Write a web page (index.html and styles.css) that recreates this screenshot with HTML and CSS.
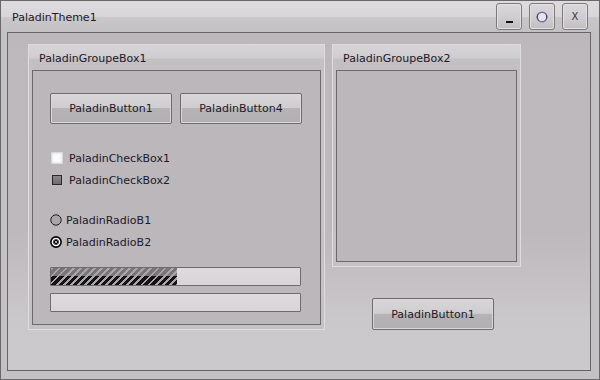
FILE: index.html
```html
<!DOCTYPE html>
<html lang="en">
<head>
    <meta charset="UTF-8">
    <title>PaladinTheme1</title>
    <link rel="stylesheet" href="styles.css">
</head>
<body>
    <div class="window">
        <!-- Title bar -->
        <div class="titleBar">
            <span class="title">PaladinTheme1</span>
            <div class="controls">
                <div class="ctrl"><span class="minIcon"></span></div>
                <div class="ctrl">
                    <svg width="12" height="12" viewBox="0 0 12 12">
                        <defs>
                            <linearGradient id="ring" x1="0" y1="0" x2="0" y2="1">
                                <stop offset="0" stop-color="#8a6a9a"/>
                                <stop offset="0.5" stop-color="#3a3a6a"/>
                                <stop offset="1" stop-color="#7a7ab0"/>
                            </linearGradient>
                        </defs>
                        <circle cx="6" cy="6" r="4.8" fill="#e6e4ea" stroke="url(#ring)" stroke-width="1.4"/>
                    </svg>
                </div>
                <div class="ctrl"><span class="closeIcon">X</span></div>
            </div>
        </div>

        <div class="panel">
            <!-- Left group box -->
            <div class="groupBox box1">
                <div class="groupHeader">PaladinGroupeBox1</div>
                <div class="groupBody body1">
                    <div class="buttonRow">
                        <button class="pButton">PaladinButton1</button>
                        <button class="pButton">PaladinButton4</button>
                    </div>

                    <div class="checkRow first">
                        <span class="checkSlot"><span class="check1"></span></span>
                        <span class="label">PaladinCheckBox1</span>
                    </div>
                    <div class="checkRow">
                        <span class="checkSlot"><span class="check2"></span></span>
                        <span class="label">PaladinCheckBox2</span>
                    </div>

                    <div class="radioRow first">
                        <svg class="radio" width="12" height="12" viewBox="0 0 12 12">
                            <circle cx="6" cy="6" r="5.2" fill="#a9a5a9" stroke="#1e1e1e" stroke-width="1"/>
                        </svg>
                        <span class="label">PaladinRadioB1</span>
                    </div>
                    <div class="radioRow">
                        <svg class="radio" width="12" height="12" viewBox="0 0 12 12">
                            <circle cx="6" cy="6" r="5.1" fill="#ffffff" stroke="#000000" stroke-width="1.6"/>
                            <circle cx="6" cy="6" r="2.8" fill="#000000"/>
                            <path d="M4.6 4.6 L7.4 7.4 M7.4 4.6 L4.6 7.4" stroke="#ffffff" stroke-width="0.7"/>
                        </svg>
                        <span class="label">PaladinRadioB2</span>
                    </div>

                    <div class="progress first"><div class="progressFill" style="width: 50.6%;"></div></div>
                    <div class="progress"></div>
                </div>
            </div>

            <!-- Right column -->
            <div class="rightColumn">
                <div class="groupBox box2">
                    <div class="groupHeader">PaladinGroupeBox2</div>
                    <div class="groupBody"></div>
                </div>
                <button class="pButton tall">PaladinButton1</button>
            </div>
        </div>
    </div>
</body>
</html>
```

FILE: styles.css
```css
body {
    margin: 0;
    font-family: "DejaVu Sans", Verdana, sans-serif;
    font-size: 11px;
    color: #221828;
}

.window {
    width: 600px;
    height: 380px;
    box-sizing: border-box;
    border: 1px solid #6a686a;
    background-color: #c3c1c3;
    display: flex;
    flex-direction: column;
}

/* Title bar */
.titleBar {
    height: 31px;
    flex-shrink: 0;
    display: flex;
    align-items: flex-start;
    justify-content: space-between;
    background: linear-gradient(#dddbdd, #d8d6d8 50%, #c9c7c9 52%, #c3c1c3);
}

.title {
    margin: 10px 0 0 11px;
}

.controls {
    display: flex;
    gap: 7px;
    margin: 2px 11px 0 0;
}

.ctrl {
    width: 26px;
    height: 27px;
    box-sizing: border-box;
    border: 1px solid #7c7a7c;
    border-radius: 3px;
    box-shadow: inset 0 0 0 1px #e2e0e2;
    background: linear-gradient(#dad8da, #cfcdcf 55%, #c0bec0);
    display: flex;
    align-items: center;
    justify-content: center;
}

.minIcon {
    width: 7px;
    height: 2px;
    background-color: #111;
    margin-top: 10px;
}

.closeIcon {
    font-size: 10px;
    color: #3a3060;
}

/* Main panel */
.panel {
    height: 339px;
    box-sizing: border-box;
    margin: 0 8px 0 6px;
    border: 1px solid #666466;
    background: linear-gradient(#bcb8bc, #bdb9bd 60%, #cbc8cb 85%, #ccc9cc);
    padding: 11px 0 0 20px;
    display: flex;
    gap: 7px;
    align-items: flex-start;
}

/* Group boxes */
.groupBox {
    box-sizing: border-box;
    border: 1px solid #dedcde;
    padding: 0 3px 4px 3px;
    display: flex;
    flex-direction: column;
    background-color: #c4c2c4;
}

.box1 {
    width: 297px;
    height: 286px;
}

.box2 {
    width: 189px;
    height: 223px;
}

.groupHeader {
    height: 25px;
    flex-shrink: 0;
    box-sizing: border-box;
    padding: 7px 0 0 10px;
    margin: 0 -3px;
    background: linear-gradient(#d6d4d6, #cfcdcf 52%, #c2c0c2 56%, #c2c0c2);
}

.groupBody {
    flex: 1;
    border: 1px solid #6c6a6c;
    background-color: #bbb7bb;
}

.body1 {
    padding: 22px 0 0 17px;
}

/* Buttons */
.buttonRow {
    display: flex;
    gap: 8px;
}

.pButton {
    width: 122px;
    height: 31px;
    border: 1px solid #6e6c6e;
    border-radius: 2px;
    box-shadow: inset 0 0 0 1px #d9d7d9;
    background: linear-gradient(#d8d6d8, #cfcdcf 48%, #b5b3b5 50%, #b1afb1);
    font-family: "DejaVu Sans", Verdana, sans-serif;
    font-size: 11px;
    color: #221828;
    padding: 0;
}

.pButton.tall {
    height: 32px;
    margin: 31px 0 0 40px;
}

/* Check boxes and radios */
.checkRow,
.radioRow {
    height: 22px;
    display: flex;
    align-items: center;
}

.checkRow.first {
    margin-top: 23px;
}

.checkSlot {
    width: 12px;
    height: 12px;
    margin-left: 1px;
    margin-right: 6px;
    display: flex;
    align-items: center;
    justify-content: center;
}

.check1 {
    width: 12px;
    height: 12px;
    box-sizing: border-box;
    background-color: #fbfbfb;
    box-shadow: inset 0 0 2px 1px #d0ced0;
}

.check2 {
    width: 10px;
    height: 10px;
    box-sizing: border-box;
    border: 1px solid #2a2a2a;
    background: linear-gradient(#8a888a, #6e6c6e);
}

.radioRow.first {
    margin-top: 18px;
}

.radio {
    margin: 0 4px 0 0;
}

/* Progress bars */
.progress {
    width: 251px;
    height: 19px;
    box-sizing: border-box;
    border: 1px solid #6e6c6e;
    border-radius: 1px;
    background: linear-gradient(#dedade, #d8d4d8);
    margin-top: 7px;
}

.progress.first {
    margin-top: 14px;
}

.progressFill {
    height: 100%;
    background:
        repeating-linear-gradient(135deg, #a8a6a8 0 2px, transparent 2px 5px),
        linear-gradient(#787678 50%, #141214 50%);
}
```
